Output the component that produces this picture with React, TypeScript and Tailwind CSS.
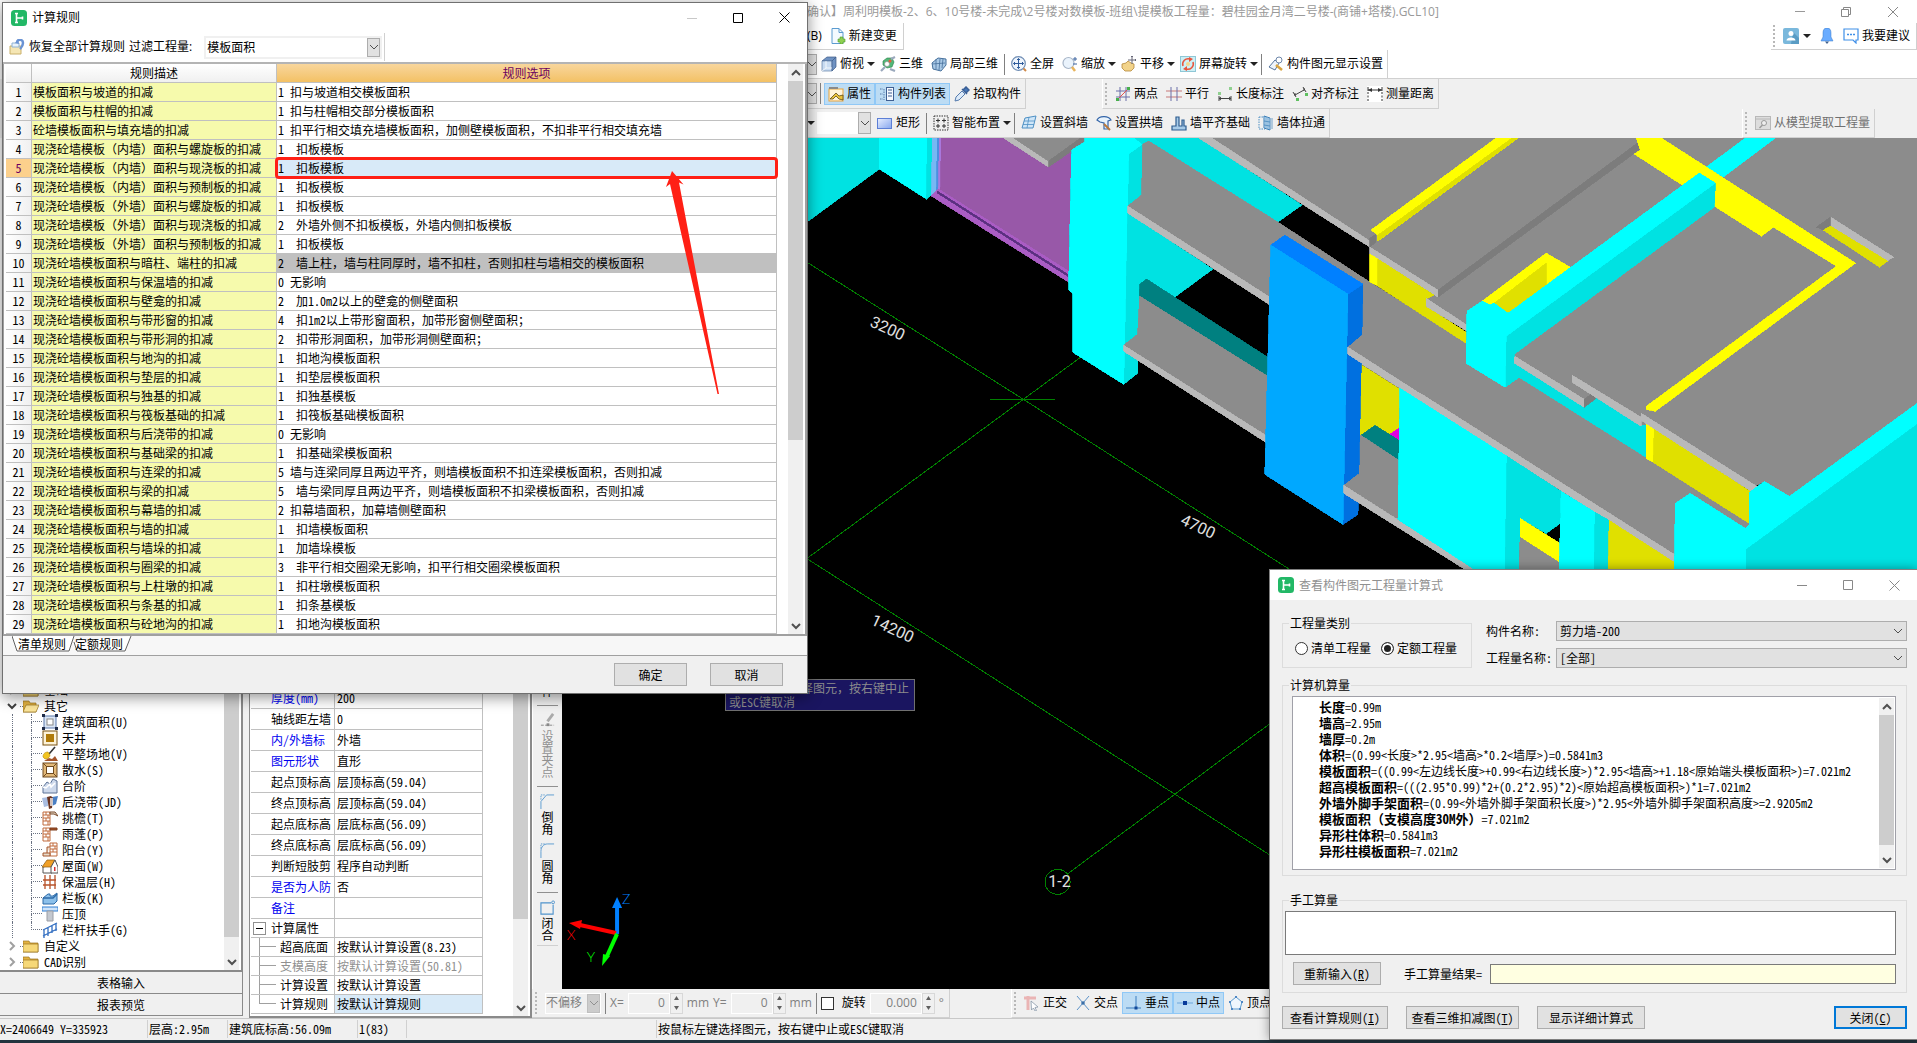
import type { ReactNode } from 'react'

const SONG =
  "font-[family-name:'Noto_Sans_Mono_CJK_SC','Noto_Sans_CJK_SC',monospace]"
const YAHEI = "font-[family-name:'Open_Sans','Noto_Sans_CJK_SC',sans-serif]"

/* ---------- icons ---------- */

function Ico({ children, size = 16 }: { children: ReactNode; size?: number }) {
  return (
    <svg width={size} height={size} viewBox="0 0 16 16" className="shrink-0" fill="none" aria-hidden="true">
      {children}
    </svg>
  )
}

const icons: Record<string, ReactNode> = {
  app: (
    <>
      <rect width="16" height="16" rx="3.5" fill="#22b866" />
      <path d="M5.500 3v10M5.500 8h6M11.500 6.500v3M4 3.500h3M4 12.500h3" stroke="#fff" strokeWidth="1.600" />
    </>
  ),
  restore: (
    <>
      <path d="M1 7h11v8H1z" fill="#f5e6b4" stroke="#c9b06a" />
      <path d="M3 4h7v4H3z" fill="#e9f3fb" stroke="#8fb2d2" />
      <path d="M8 3c1-3 6-3 6 1 0 3-1 4-3 6" stroke="#6a93d4" strokeWidth="2.500" />
      <path d="M6 4l3-4 1 5z" fill="#6a93d4" />
    </>
  ),
  newDoc: (
    <>
      <path d="M2 .5h7l4 4v11H2z" fill="#f4faff" stroke="#5b9bd0" />
      <path d="M9 .5v4h4" stroke="#5b9bd0" />
      <path d="M10 9h3v2h2v3h-2v2h-3v-2H8v-3h2z" fill="#8ed052" stroke="#4f9c30" strokeWidth=".6" />
    </>
  ),
  cube: (
    <>
      <path d="M1 5l5-4h9l-4 4z" fill="#6f92c2" stroke="#3c5a86" strokeWidth=".7" />
      <path d="M1 5h10v10H1z" fill="#c9dcf2" stroke="#5f7ea8" strokeWidth=".7" />
      <path d="M11 5l4-4v10l-4 4z" fill="#6f92c2" stroke="#3c5a86" strokeWidth=".7" />
      <path d="M5 5v7L1 15M5 12h6" stroke="#fff" strokeWidth=".8" />
    </>
  ),
  orbit: (
    <>
      <path d="M3 5l4-3h5l2 4-2 5-5 1-4-3z" fill="#52b878" stroke="#2a7d48" strokeWidth=".6" />
      <circle cx="7" cy="8" r="2.500" fill="#fff" stroke="#888" strokeWidth=".6" />
      <path d="M1 15l4-4M10 13l5 2M11 3l4-2" stroke="#9aa8bc" strokeWidth="2.200" />
      <circle cx="10" cy="5" r="1.500" fill="#e85a3c" />
    </>
  ),
  partial: (
    <>
      <path d="M1 7l6-5 8 1v6l-5 6-8-2z" fill="#a9c9e6" stroke="#46709c" />
      <path d="M5 3v10M9 3l-1 11M1 8l13-1M12 3l-1 9" stroke="#46709c" strokeWidth=".8" />
    </>
  ),
  fit: (
    <>
      <circle cx="7.500" cy="7.500" r="6.800" fill="#eef5fd" stroke="#6f8db4" strokeWidth="1.200" />
      <path d="M7.500 2.500v10M2.500 7.500h10M6 4l1.500-1.500L9 4M6 11l1.500 1.500L9 11M4 6L2.500 7.500 4 9M11 6l1.500 1.500L11 9" stroke="#2f5c9c" />
      <path d="M12.500 12.500l2.500 2.500" stroke="#d08a4a" strokeWidth="2" />
    </>
  ),
  zoom: (
    <>
      <circle cx="6.500" cy="7" r="5.500" fill="#eaf3fc" stroke="#a8b6c8" strokeWidth="1.200" />
      <path d="M10 11l3 4" stroke="#e8b45c" strokeWidth="2.500" />
      <path d="M11 3h4M13 1v4M11 8h4" stroke="#3d64a0" />
    </>
  ),
  pan: (
    <>
      <path d="M1 8l4-1 2-2 3 2 3 1v4l-3 3H4l-3-3z" fill="#f2d38a" stroke="#b5893a" strokeWidth=".8" />
      <path d="M11 0v8M7 4h8M10 1l1-1 1 1M14 3l1 1-1 1" stroke="#667" />
    </>
  ),
  rotate: (
    <>
      <rect x=".5" y=".5" width="15" height="15" fill="#cdeff5" stroke="#8fc7d6" />
      <path d="M3 10a5.500 5.500 0 017-7M13 6a5.500 5.500 0 01-7 7" stroke="#e8543c" strokeWidth="1.500" />
      <path d="M9 1l4 2-4 3zM7 15l-4-2 4-3z" fill="#e8543c" />
      <circle cx="8" cy="8" r="2" fill="#f4d98c" />
    </>
  ),
  display: (
    <>
      <path d="M1 11l6-7 4 3-4 7z" fill="#eef4fb" stroke="#56749c" />
      <circle cx="11" cy="4" r="3" fill="#fff" stroke="#6e87aa" />
      <path d="M8 9l6 5" stroke="#d9a441" strokeWidth="2.500" />
    </>
  ),
  props: (
    <>
      <rect x="1" y="3" width="14" height="12" fill="#fff4da" stroke="#e7a33c" />
      <path d="M1 1h9v2H1z" fill="#8a8a8a" />
      <path d="M2 13l6-6 3 3 4-1v5l-4-1-3-3-3 3z" fill="#e9c33c" stroke="#5c4a1a" strokeWidth=".8" />
    </>
  ),
  list: (
    <>
      <path d="M1 3h3M1 8h3M1 13h3M5 3v11" stroke="#5579a8" strokeDasharray="1.500 1" />
      <rect x="7.500" y="1.500" width="7" height="13" fill="#f5f9ff" stroke="#3f5f92" />
      <path d="M9 4h4M9 7h4M9 10h4" stroke="#3f5f92" strokeWidth="1.200" />
    </>
  ),
  dropper: (
    <>
      <path d="M1 15l1-4 6-6 3 3-6 6z" fill="#dbe9f8" stroke="#567cae" />
      <path d="M8 3l5 5M9 4l3-3 3 3-3 3z" fill="#4778b8" stroke="#3a5f96" strokeWidth="1.500" />
    </>
  ),
  twoPoint: (
    <>
      <path d="M1 5h14M1 11h14M5 1v14M11 1v14" stroke="#6b6fa8" />
      <path d="M2 14L14 2" stroke="#e05252" />
      <path d="M12 1h3v3h-3zM1 12h3v3H1z" fill="#47b04b" />
    </>
  ),
  parallel: (
    <>
      <path d="M0 5h16M0 11h16" stroke="#c77878" />
      <path d="M5 1v14M11 1v14" stroke="#6b6fa8" />
    </>
  ),
  length: (
    <>
      <path d="M2 10v5M14 10v5M2 12.500h12M4 11l-2 1.500L4 14M12 11l2 1.500-2 1.500" stroke="#444" />
      <path d="M1 6h3v3H1zM12 1h3v3h-3z" fill="#8fd08f" />
    </>
  ),
  aligned: (
    <>
      <path d="M1 6l3 5M11 1l3 5M3 9l9-5M3 7v3M12 2v3" stroke="#444" />
      <path d="M4 12h3v3H4zM13 7h3v3h-3z" fill="#5fc060" />
    </>
  ),
  measure: (
    <>
      <path d="M0 0h16v16H0z" fill="#fff" />
      <path d="M1 1v4M15 1v4M1 4h14" stroke="#333" />
      <path d="M1 6v9M15 6v9" stroke="#333" strokeDasharray="2 1.500" />
      <path d="M1 4l4-2v4zM15 4l-4-2v4z" fill="#333" />
    </>
  ),
  rect: (
    <>
      <rect x=".5" y="3.500" width="14" height="10" fill="url(#rectFill)" stroke="#5c7fd6" />
      <defs>
        <linearGradient id="rectFill" x1="0" y1="0" x2="1" y2="1">
          <stop stopColor="#e8efff" />
          <stop offset="1" stopColor="#86a6ee" />
        </linearGradient>
      </defs>
    </>
  ),
  smart: (
    <>
      <rect x="1" y="1" width="14" height="14" stroke="#333" strokeDasharray="1.500 1" />
      <path d="M5 3.500v4M3 5.500h4M11 3.500v4M9 5.500h4M5 9v4M3 11h4M11 9v4M9 11h4" stroke="#333" />
    </>
  ),
  slope: (
    <>
      <path d="M4 3l11-2-3 12H1z" fill="#cfe6f8" stroke="#4e90c4" />
      <path d="M3 6h11M2 9.500h11M8 2L6 13" stroke="#4e90c4" strokeWidth=".8" />
    </>
  ),
  arch: (
    <>
      <path d="M1 5c2-4 11-5 14 0l-3 1v8H8V8L4 7z" fill="#e8f3fc" stroke="#3465a8" strokeWidth="1.200" />
      <path d="M8 9l6 6" stroke="#b8783c" strokeWidth="2" />
    </>
  ),
  align: (
    <path d="M1 15v-4h4V2h3v9h3V5h2v6h2v4z" fill="#a8cbe8" stroke="#2d5c8f" strokeWidth="1.200" />
  ),
  through: (
    <>
      <path d="M1 2h6v12H1z" stroke="#4e90c4" strokeDasharray="1.500 1" />
      <path d="M6 1l6 2v12l-6-2z" fill="#cfe6f8" stroke="#3b7fb8" />
      <path d="M8 2v11M10 3v11M6 6l6 1M6 10l6 1M14 3v11" stroke="#3b7fb8" strokeWidth=".7" />
    </>
  ),
  extract: (
    <>
      <rect x=".5" y="1.500" width="15" height="13" fill="#ddd" stroke="#b8b8b8" />
      <path d="M1 4h14" stroke="#b8b8b8" />
      <circle cx="9" cy="8" r="2.500" fill="#eee" stroke="#999" />
      <path d="M7.500 10l-3 3" stroke="#999" strokeWidth="1.500" />
    </>
  ),
  user: (
    <>
      <rect width="16" height="16" rx="2" fill="#7ab8dc" />
      <path d="M10 4l6 6v6H8z" fill="#5a9cc4" />
      <circle cx="8" cy="5.500" r="2.500" fill="#fff" />
      <path d="M3.500 12.500c0-4 9-4 9 0z" fill="#fff" />
    </>
  ),
  bell: (
    <>
      <path d="M8 0c3 0 4 2 4 5v4l2 4H2l2-4V5c0-3 1-5 4-5z" fill="#6aacff" stroke="#3579c8" strokeWidth=".5" />
      <path d="M6 13.500h4L8 16z" fill="#3d5f8c" />
    </>
  ),
  chat: (
    <>
      <path d="M1 1h14v11h-2v3l-3-3H1z" fill="#fff" stroke="#3f8fe8" strokeWidth="1.200" />
      <path d="M4 6.500h8" stroke="#3f8fe8" strokeWidth="1.300" strokeDasharray="2 1" />
    </>
  ),
  ortho: (
    <>
      <path d="M0 3h12M4 1v14" stroke="#eab4b4" strokeWidth="3" />
      <path d="M7 6l7 6-3 .5 1.500 3-1.500.5-1.500-3-2 2z" fill="#fff" stroke="#8898a8" strokeWidth=".8" />
    </>
  ),
  cross: (
    <>
      <path d="M2 1l12 14M14 1L2 15" stroke="#5b92c8" />
      <circle cx="8" cy="8" r="1.800" fill="#3a6fa8" />
    </>
  ),
  perp: (
    <>
      <path d="M10 1v12M0 13h15" stroke="#3c7fc0" />
      <rect x="8.500" y="11.500" width="3" height="3" fill="#10489a" />
    </>
  ),
  mid: (
    <>
      <path d="M0 8h16" stroke="#6da6dc" />
      <rect x="6" y="6" width="4" height="4" fill="#083a9a" />
    </>
  ),
  vertex: (
    <>
      <path d="M8 2l6 5-2 7H4L2 7z" fill="#eef6fd" stroke="#5b9bd0" />
      <path d="M7 1h2v2H7zM13 6h2v2h-2zM1 6h2v2H1zM3 13h2v2H3zM11 13h2v2h-2z" fill="#4d86c4" />
    </>
  ),
  area: (
    <>
      <rect x="2" y="2" width="12" height="12" fill="#dbe6f5" stroke="#5a78ac" />
      <rect x="5" y="5" width="6" height="6" fill="#fff" stroke="#888" />
      <path d="M0 0h3v3H0zM13 0h3v3h-3zM0 13h3v3H0zM13 13h3v3h-3z" fill="#1f2c48" />
    </>
  ),
  shaft: (
    <>
      <rect x="1" y="1" width="14" height="14" fill="#fdf3d8" stroke="#7a5210" />
      <rect x="4" y="4" width="8" height="8" fill="#b07a08" />
    </>
  ),
  shovel: (
    <>
      <path d="M7 8l6-7" stroke="#333" strokeWidth="1.600" />
      <path d="M1 11c0-4 3-5 5-5l2 3c0 2-2 4-5 4z" fill="#f2c420" stroke="#b58a08" strokeWidth=".6" />
      <path d="M2 15l5-3 3 1 3-3 3 5z" fill="#a4552a" />
    </>
  ),
  apron: (
    <>
      <rect x="1" y="1" width="14" height="14" fill="#e2b878" stroke="#6e4a20" />
      <rect x="4.500" y="4.500" width="7" height="7" fill="#fff" stroke="#6e4a20" />
      <path d="M1 1l3 3M15 1l-3 3M1 15l3-3M15 15l-3-3" stroke="#6e4a20" />
    </>
  ),
  steps: (
    <>
      <path d="M1 15V9l4-5 3 2 3-5 4 2v12z" fill="#cdd9ec" stroke="#5d7397" />
      <path d="M1 9l3 1 4-4 1 3 4-4" stroke="#fff" strokeWidth="1.500" />
    </>
  ),
  strip: (
    <>
      <path d="M0 4l6-1v9l-4 1z" fill="#a9bde0" />
      <path d="M10 3l6-1-2 8-4 2z" fill="#4a7fc4" />
      <path d="M5 3l4-1 2 2-1 10-3 1z" fill="#6b3420" />
      <path d="M8 4h3v8H8z" fill="#fff" opacity=".7" />
    </>
  ),
  eave: (
    <>
      <path d="M1 2h7v13H1zM1 5h7M1 8h7M1 11h7M4 2v3M6 5v3M4 8v3M6 11v4" fill="#fff" stroke="#c06a3c" />
      <path d="M8 2h5l3 4-4-2H8z" fill="#e8dccb" stroke="#7a4a2a" />
    </>
  ),
  canopy: (
    <>
      <path d="M1 2h7v13H1zM1 5h7M1 8h7M1 11h7M4 2v3M6 5v3M4 8v3M6 11v4" fill="#fff" stroke="#c06a3c" />
      <path d="M8 2h7v2H8z" fill="#a4552a" stroke="#7a3a1a" />
    </>
  ),
  balcony: (
    <>
      <path d="M8 1h7v13H8zM8 4h7M8 7h7M8 10h7M11 1v3M13 4v3M11 7v3" fill="#fff" stroke="#c06a3c" />
      <path d="M1 14v-3h7v3zM5 11V5h3" fill="#e8dccb" stroke="#a4552a" />
    </>
  ),
  roof: (
    <>
      <path d="M1 9v6h9V7z" fill="#fff" stroke="#555" />
      <path d="M0 9l5-7h8l-4 7z" fill="#f0a028" stroke="#8a5a10" strokeWidth=".7" />
      <path d="M9 9l4-7 3 7v6H9z" fill="#fff" stroke="#555" />
      <path d="M12 9h1.500v4H12z" fill="#d83030" />
    </>
  ),
  insulation: (
    <path d="M3 1v14M8 1v14M13 1v14M1 6h13M1 11h13" stroke="#b8532a" strokeWidth="1.300" />
  ),
  railBoard: (
    <>
      <path d="M1 8l5-4h2v2h3l4-3v8l-3 3H1z" fill="#8cc0ea" stroke="#2c6aa8" />
      <path d="M1 8h10l4-4" stroke="#2c6aa8" strokeWidth="1.500" />
    </>
  ),
  coping: (
    <>
      <path d="M0 1h16v4H0z" fill="#cfe4fa" stroke="#2f7dd0" />
      <path d="M5 5h6v10H5z" fill="#c4c8cf" stroke="#9a9ea6" />
    </>
  ),
  handrail: (
    <path d="M1 8l14-7M1 14l6-3 8-4M2 8v8M6 6v8M10 4v7M14 1v8" stroke="#2f6cc0" strokeWidth="1.300" />
  ),
  folder: (
    <>
      <path d="M0 3h6l1 2h8v9H0z" fill="#e3b341" stroke="#9a7420" strokeWidth=".7" />
      <path d="M0 6h15v8H0z" fill="#f6d878" stroke="#9a7420" strokeWidth=".7" />
    </>
  ),
  folderOpen: (
    <>
      <path d="M0 3h6l1 2h6v9H0z" fill="#e3b341" stroke="#9a7420" strokeWidth=".7" />
      <path d="M3 7h13l-3 7H0z" fill="#fbe59a" stroke="#9a7420" strokeWidth=".7" />
    </>
  ),
  grip: (
    <>
      <path d="M14 1l-6 8" stroke="#aaa" strokeWidth="3" />
      <path d="M1 13h14" stroke="#888" strokeDasharray="3 1.500" />
      <path d="M7 11h3v3H7z" fill="#888" />
    </>
  ),
  chamfer: (
    <>
      <path d="M1 1h5M1 2v5" stroke="#5b9bd0" strokeDasharray="1.500 1" />
      <path d="M1 16V8l6-7h8" stroke="#5b9bd0" />
    </>
  ),
  fillet: (
    <>
      <path d="M1 1h5M1 2v5" stroke="#5b9bd0" strokeDasharray="1.500 1" />
      <path d="M1 16V9c0-5 3-8 7-8h7" stroke="#5b9bd0" />
    </>
  ),
  close: (
    <>
      <path d="M12 3H1v12h13V5" stroke="#4f93cc" strokeWidth="1.200" />
      <circle cx="14" cy="2.500" r="1.500" stroke="#4f93cc" />
    </>
  ),
}

function Caret() {
  return (
    <svg width="8" height="4" viewBox="0 0 8 4" className="shrink-0" aria-hidden="true">
      <path d="M0 0h8L4 4z" fill="#222" />
    </svg>
  )
}

function Chevron({ dir = 'down', color = '#505050', w = 1 }: { dir?: 'up' | 'down' | 'right'; color?: string; w?: number }) {
  const d = dir === 'down' ? 'M1 3l4 4 4-4' : dir === 'up' ? 'M1 7l4-4 4 4' : 'M3 1l4 4-4 4'
  return (
    <svg width="10" height="10" viewBox="0 0 10 10" className="shrink-0" fill="none" aria-hidden="true">
      <path d={d} stroke={color} strokeWidth={w} />
    </svg>
  )
}

/* ---------- small controls ---------- */

interface ToolProps {
  icon: string
  label: string
  caret?: boolean
  active?: boolean
  disabled?: boolean
}

function Tool({ icon, label, caret, active, disabled }: ToolProps) {
  const state = active ? 'bg-[#bcdcf4] outline outline-1 -outline-offset-1 outline-[#90c8f6]' : ''
  return (
    <button
      type="button"
      disabled={disabled}
      className={`flex h-[22px] shrink-0 items-center gap-[3px] whitespace-nowrap pl-1 ${caret ? 'pr-px' : 'pr-1'} ${disabled ? 'text-[#707070]' : ''} ${state}`}
    >
      <Ico>{icons[icon]}</Ico>
      {label}
      {caret && <Caret />}
    </button>
  )
}

const Sep = () => <span className="mx-[2px] h-[21px] w-px shrink-0 bg-[#808080]" />

const Grip = () => <span className="mr-1 ml-[2px] h-[22px] w-0 border-l-2 border-dotted border-[#b8b8b8]" />

function ComboEnd() {
  return (
    <button type="button" aria-label="展开" className="flex h-[21px] w-[10px] items-center justify-center border border-[#adadad] bg-[#e1e1e1]">
      <Chevron />
    </button>
  )
}

function WindowButtons({ color, faded }: { color: string; faded?: boolean }) {
  return (
    <div className="flex items-center">
      <button type="button" aria-label="最小化" className="flex h-6 w-[46px] items-center justify-center">
        <svg width="10" height="10" viewBox="0 0 10 10"><path d="M0 5.500h10" stroke={faded ? '#c8c8c8' : color} /></svg>
      </button>
      <button type="button" aria-label="最大化" className="flex h-6 w-[46px] items-center justify-center">
        <svg width="10" height="10" viewBox="0 0 10 10"><path d="M.5.5h9v9h-9z" fill="none" stroke={color} /></svg>
      </button>
      <button type="button" aria-label="关闭" className="flex h-6 w-[46px] items-center justify-center">
        <svg width="11" height="11" viewBox="0 0 11 11"><path d="M.5.5l10 10M10.500.5l-10 10" stroke={color} /></svg>
      </button>
    </div>
  )
}

function ScrollBar({ thumb, up }: { thumb: string; up?: boolean }) {
  return (
    <div className="flex w-[15px] shrink-0 flex-col bg-[#f0f0f0]">
      {up && (
        <span className="flex h-[17px] items-center justify-center">
          <Chevron dir="up" w={2} />
        </span>
      )}
      <span className={`bg-[#cdcdcd] ${thumb}`} />
      <span className="mt-auto flex h-[17px] items-center justify-center">
        <Chevron w={2} />
      </span>
    </div>
  )
}

/* ---------- top bars ---------- */

function TopBars() {
  return (
    <header className={`shrink-0 text-xs ${YAHEI}`}>
      <div className="bg-white pl-[807px]">
        <div className="flex h-[23px] items-center justify-between">
          <h1 className="whitespace-nowrap text-[#999]">
            确认】周利明模板-2、6、10号楼-未完成\2号楼对数模板-班组\提模板工程量：碧桂园金月湾二号楼-(商铺+塔楼).GCL10]
          </h1>
          <div className="flex">
            <button type="button" aria-label="最小化" className="flex w-[46px] items-center justify-center">
              <svg width="10" height="10" viewBox="0 0 10 10"><path d="M0 4.500h10" stroke="#999" /></svg>
            </button>
            <button type="button" aria-label="还原" className="flex w-[46px] items-center justify-center">
              <svg width="10" height="10" viewBox="0 0 10 10" fill="none" stroke="#888"><path d="M.5 2.500h7v7h-7zM2.500 2.500v-2h7v7h-2" /></svg>
            </button>
            <button type="button" aria-label="关闭" className="flex w-[48px] items-center justify-center">
              <svg width="10" height="10" viewBox="0 0 10 10"><path d="M0 0l10 10M10 0L0 10" stroke="#888" /></svg>
            </button>
          </div>
        </div>
        <div className="flex h-[27px] items-stretch justify-between">
          <div className="flex items-center gap-1 border-r border-b border-[#d0d0d0] pr-[2px]">
            <span>(B)</span>
            <Tool icon="newDoc" label="新建变更" />
          </div>
          <div className="flex items-center border-r border-b border-[#d0d0d0] pr-[2px]">
            <Grip />
            <button type="button" aria-label="用户" className="flex items-center gap-1 px-1">
              <Ico>{icons.user}</Ico>
              <Caret />
            </button>
            <button type="button" aria-label="消息" className="px-1">
              <Ico>{icons.bell}</Ico>
            </button>
            <Tool icon="chat" label="我要建议" />
          </div>
        </div>
        <div className="flex h-[29px] items-stretch border-b border-[#d0d0d0]">
          <div className="flex items-center border-r border-[#d0d0d0]">
            <ComboEnd />
            <Tool icon="cube" label="俯视" caret />
            <Tool icon="orbit" label="三维" />
            <Tool icon="partial" label="局部三维" />
            <Sep />
            <Tool icon="fit" label="全屏" />
            <Tool icon="zoom" label="缩放" caret />
            <Tool icon="pan" label="平移" caret />
            <Tool icon="rotate" label="屏幕旋转" caret />
            <Sep />
            <Tool icon="display" label="构件图元显示设置" />
          </div>
        </div>
      </div>
      <div className="flex h-[30px] items-stretch gap-[76px] pl-[807px]">
        <div className="flex items-center border-r border-b border-[#d0d0d0]">
          <ComboEnd />
          <span className="mx-[3px] h-[21px] w-px bg-[#808080]" />
          <Tool icon="props" label="属性" active />
          <Tool icon="list" label="构件列表" active />
          <Tool icon="dropper" label="拾取构件" />
        </div>
        <div className="flex items-center border-r border-b border-l border-[#d0d0d0] border-l-white">
          <Grip />
          <Tool icon="twoPoint" label="两点" />
          <Tool icon="parallel" label="平行" />
          <Tool icon="length" label="长度标注" />
          <Tool icon="aligned" label="对齐标注" />
          <Tool icon="measure" label="测量距离" />
        </div>
      </div>
      <div className="flex h-[29px] items-stretch justify-between pr-[42px] pl-[807px]">
        <div className="flex items-center border-r border-b border-[#d0d0d0]">
          <Caret />
          <span className="ml-[2px] h-[22px] w-[41px] bg-white" />
          <button type="button" aria-label="展开" className="mr-[2px] flex h-[22px] w-[13px] items-center justify-center border border-[#adadad] bg-[#e1e1e1]">
            <Chevron />
          </button>
          <Tool icon="rect" label="矩形" />
          <Sep />
          <Tool icon="smart" label="智能布置" caret />
          <Sep />
          <Tool icon="slope" label="设置斜墙" />
          <Tool icon="arch" label="设置拱墙" />
          <Tool icon="align" label="墙平齐基础" />
          <Tool icon="through" label="墙体拉通" />
        </div>
        <div className="flex items-center border-r border-b border-l border-[#d0d0d0] border-l-white">
          <Grip />
          <Tool icon="extract" label="从模型提取工程量" disabled />
        </div>
      </div>
    </header>
  )
}

/* ---------- component tree ---------- */

const treeItems = [
  ['area', '建筑面积(U)'],
  ['shaft', '天井'],
  ['shovel', '平整场地(V)'],
  ['apron', '散水(S)'],
  ['steps', '台阶'],
  ['strip', '后浇带(JD)'],
  ['eave', '挑檐(T)'],
  ['canopy', '雨蓬(P)'],
  ['balcony', '阳台(Y)'],
  ['roof', '屋面(W)'],
  ['insulation', '保温层(H)'],
  ['railBoard', '栏板(K)'],
  ['coping', '压顶'],
  ['handrail', '栏杆扶手(G)'],
]

function Folder({ label, open }: { label: string; open?: boolean }) {
  return (
    <li className="flex h-4 items-center pl-[7px]">
      <Chevron dir={open ? 'down' : 'right'} color={open ? '#404040' : '#a0a0a0'} w={2} />
      <span className="ml-[3px] w-[3px] border-b border-dotted border-gray-500" />
      <Ico>{icons[open ? 'folderOpen' : 'folder']}</Ico>
      <span className="ml-[5px]">{label}</span>
    </li>
  )
}

function TreePanel() {
  return (
    <section className="flex w-[243px] shrink-0 flex-col pb-[2px]">
      <div className="flex min-h-0 flex-1 border-r-2 border-b-2 border-[#8a8a8a] bg-white pr-[2px]">
        <ul className="flex min-h-0 flex-1 flex-col justify-end overflow-hidden whitespace-nowrap leading-4">
          <Folder label="基础" />
          <Folder label="其它" open />
          {treeItems.map(([icon, label], i) => (
            <li key={icon} className="ml-[12px] flex h-4 items-center border-l border-dotted border-gray-500 pl-[18px]">
              <span className="w-[11px]">
                <span className="block h-2 border-b border-l border-dotted border-gray-500" />
                <span className={`block h-2 ${i < treeItems.length - 1 ? 'border-l border-dotted border-gray-500' : ''}`} />
              </span>
              <Ico>{icons[icon]}</Ico>
              <span className="ml-1">{label}</span>
            </li>
          ))}
          <Folder label="自定义" />
          <Folder label="CAD识别" />
        </ul>
        <ScrollBar thumb="h-[96%]" />
      </div>
      <button type="button" className="h-[22px] border-r border-b border-[#8a8a8a]">表格输入</button>
      <button type="button" className="h-[22px] border-r border-b border-[#8a8a8a]">报表预览</button>
    </section>
  )
}

/* ---------- property grid ---------- */

const properties = [
  { label: '厚度(mm)', value: '200', blue: true },
  { label: '轴线距左墙', value: '0' },
  { label: '内/外墙标', value: '外墙', blue: true },
  { label: '图元形状', value: '直形', blue: true },
  { label: '起点顶标高', value: '层顶标高(59.04)' },
  { label: '终点顶标高', value: '层顶标高(59.04)' },
  { label: '起点底标高', value: '层底标高(56.09)' },
  { label: '终点底标高', value: '层底标高(56.09)' },
  { label: '判断短肢剪', value: '程序自动判断' },
  { label: '是否为人防', value: '否', blue: true },
  { label: '备注', value: '', blue: true },
]

const calcProperties = [
  { label: '超高底面', value: '按默认计算设置(8.23)' },
  { label: '支模高度', value: '按默认计算设置(50.81)', muted: true },
  { label: '计算设置', value: '按默认计算设置' },
  { label: '计算规则', value: '按默认计算规则', selected: true },
]

function PropertyPanel() {
  const cell = 'border-r border-b border-[#c0c0c0] p-0'
  return (
    <section className="ml-[6px] flex w-[283px] shrink-0 border-r-2 border-b-2 border-l border-[#8a8a8a] bg-white">
      <div className="flex min-h-0 flex-1 flex-col justify-end overflow-hidden pr-[30px] pb-[2px] pl-px">
        <table className="w-full table-fixed border-separate border-spacing-0 whitespace-nowrap text-left">
          <colgroup>
            <col className="w-[84px]" />
            <col />
          </colgroup>
          <tbody>
            {properties.map((p) => (
              <tr key={p.label} className="h-[21px]">
                <th scope="row" className={`${cell} overflow-hidden pl-5 font-normal ${p.blue ? 'text-[#0000f0]' : ''}`}>
                  {p.label}
                </th>
                <td className={`${cell} pl-[2px]`}>{p.value}</td>
              </tr>
            ))}
            <tr className="h-[19px]">
              <th scope="row" className={`${cell} font-normal`}>
                <span className="flex items-center gap-[5px] pl-[2px]">
                  <button type="button" aria-label="收起" className="flex size-[13px] items-center justify-center border border-[#909090] leading-none">
                    <span className="h-px w-[7px] bg-black" />
                  </button>
                  计算属性
                </span>
              </th>
              <td className={cell} />
            </tr>
            {calcProperties.map((p, i) => (
              <tr key={p.label} className={`h-[19px] ${p.muted ? 'text-[#909090]' : ''}`}>
                <th scope="row" className={`${cell} font-normal`}>
                  <span className="flex items-center pl-2">
                    <span className="mr-1 w-[17px]">
                      <span className="block h-[9px] border-b border-l border-[#a0a0a0]" />
                      <span className={`block h-[9px] ${i < 3 ? 'border-l border-[#a0a0a0]' : ''}`} />
                    </span>
                    {p.label}
                  </span>
                </th>
                <td className={`${cell} pl-[2px] ${p.selected ? 'bg-[#d8eaf8]' : ''}`}>{p.value}</td>
              </tr>
            ))}
          </tbody>
        </table>
      </div>
      <ScrollBar thumb="h-[89%]" />
      <span className="w-[2px]" />
    </section>
  )
}

/* ---------- side edit bar ---------- */

function SideTool({ icon, label, disabled }: { icon: string; label: string; disabled?: boolean }) {
  return (
    <button type="button" disabled={disabled} className={`flex w-full flex-col items-center gap-[3px] ${disabled ? 'text-[#909090]' : ''}`}>
      <Ico size={15}>{icons[icon]}</Ico>
      <span className="w-3 leading-3 break-all">{label}</span>
    </button>
  )
}

function SideBar() {
  return (
    <div className={`flex w-[30px] shrink-0 flex-col justify-end overflow-hidden border-l border-white px-1 pb-[43px] ${YAHEI}`}>
      <div className="flex flex-col items-center gap-[7px] border-b border-[#d0d0d0] pb-[3px]">
        <SideTool icon="close" label="打断构件" />
        <span className="h-px w-full bg-[#909090]" />
        <SideTool icon="grip" label="设置夹点" disabled />
        <span className="h-px w-full bg-[#909090]" />
        <SideTool icon="chamfer" label="倒角" />
        <SideTool icon="fillet" label="圆角" />
        <span className="h-px w-full bg-[#909090]" />
        <SideTool icon="close" label="闭合" />
      </div>
    </div>
  )
}

/* ---------- 3D view ---------- */

const GRAY = '#8c8c8c'
const EDGE = '#b9b9b9'
const SHADE = '#7c7c7c'
const CYAN = '#00ffff'
const CYAN_D = '#00e2e2'
const YEL = '#ffff00'
const YEL_D = '#e0e000'

const faces: [string, string][] = [
  // left walls
  [CYAN_D, '560,138 879,138 879,169 808,221 560,402'],
  [CYAN, '879,138 928,138 926,199 879,169'],
  [CYAN_D, '927,138 932,138 931,195 926,199'],
  ['#76b8f4', '932,138 938,138 937,191 931,195'],
  ['#4a90e0', '937,138 939,138 938,190 936,191'],
  ['#a878dc', '939,138 942,138 941,191 938,190'],
  ['#9858a8', '941,138 1071,138 1068,278 940,191'],
  ['#aa5cc4', '938,189 1068,271 1068,282 931,196'],
  ['#5a3080', '937,191 1067,274 1067,276 937,193'],
  [EDGE, '1003,138 1013,138 1048,161 1048,167'],
  [GRAY, '1013,138 1080,138 1048,161'],
  [SHADE, '1080,138 1084,138 1084,142 1048,167 1048,161'],
  // tall column
  [CYAN_D, '1128,154 1142,144 1137,373 1123,384'],
  [CYAN, '1071,150 1084,142 1084,138 1134,138 1142,144 1128,154 1123,384 1072,352 1072,293 1068,290'],
  [CYAN_D, '1134,138 1198,138 1301,205 1277,222 1148,141 1142,144'],
  // middle slab
  [CYAN_D, '1127,213 1212,269 1174,297 1146,279 1139,285 1126,285'],
  [GRAY, '1148,141 1142,144 1141,195 1127,206 1350,350 1673,554 1744,528 1749,523 1645,457 1518,377 1465,342 1369,282 1277,222'],
  [EDGE, '1127,206 1350,349 1673,554 1673,562 1350,357 1127,213'],
  // lower slab
  ['#008080', '1146,279 1267,357 1267,376 1139,296 1139,284'],
  [GRAY, '1139,296 1267,376 1265,435 1123,345 1137,334'],
  [EDGE, '1123,345 1265,435 1265,442 1123,351'],
  [YEL_D, '1358,363 1399,389 1398,430 1389,434 1374,425 1357,437'],
  ['#e000e0', '1389,434 1399,427 1398,440'],
  ['#008080', '1360,435 1374,425 1398,440 1398,460'],
  [GRAY, '1357,433 1398,460 1397,518 1350,489'],
  // selected wall
  ['#0070e0', '1347,294 1362,284 1357,514 1342,524'],
  ['#0080ff', '1270,245 1284,235 1362,284 1347,294'],
  ['#00a8ff', '1270,245 1347,294 1342,524 1264,474'],
  [GRAY, '1347,347 1361,335 1420,372 1420,393'],
  [EDGE, '1347,347 1420,394 1420,401 1347,354'],
  [GRAY, '1343,485 1357,474 1397,500 1397,519'],
  [EDGE, '1343,485 1475,569 1464,569 1343,493'],
  // walls under the middle slab
  [CYAN, '1399,388 1506,456 1504,570 1475,570 1397,519'],
  [CYAN_D, '1506,456 1560,491 1559,523 1545,533 1519,518 1518,570 1504,570'],
  [YEL, '1519,518 1559,543 1558,562 1519,537'],
  [GRAY, '1519,537 1558,562 1558,570 1518,570'],
  [CYAN, '1560,491 1594,512 1593,570 1558,570'],
  [CYAN_D, '1594,512 1608,520 1607,570 1593,570'],
  [YEL_D, '1608,520 1673,562 1673,570 1607,570'],
  // upper slab
  [GRAY, '1211,138 1369,241 1369,248 1437,291 1425,298 1466,325 1513,356 1583,400 1590,394 1640,426 1750,487 1763,481 1788,496 1917,402 1917,138'],
  [EDGE, '1198,138 1211,138 1369,241 1369,247 1350,235'],
  [SHADE, '1369,238 1375,234 1375,242 1369,247'],
  [EDGE, '1369,247 1437,290 1437,297 1369,254'],
  [SHADE, '1437,290 1639,141 1639,149 1437,297'],
  [YEL, '1369,254 1377,259 1377,286 1369,282'],
  [YEL_D, '1377,259 1433,295 1425,299 1425,306 1465,332 1465,343 1377,286'],
  [EDGE, '1425,298 1466,325 1466,331 1425,306'],
  [CYAN_D, '1511,361 1583,406 1595,398 1640,425 1645,425 1645,457 1518,377 1504,387 1504,362'],
  [EDGE, '1512,355 1583,399 1583,407 1512,362'],
  [SHADE, '1583,399 1590,394 1595,398 1583,407'],
  [EDGE, '1571,375 1640,417 1640,426 1571,382'],
  [YEL, '1645,423 1653,428 1652,462 1645,458'],
  [YEL_D, '1653,428 1749,491 1748,523 1652,462'],
  [EDGE, '1640,413 1757,487 1750,491 1640,420'],
  // beams
  [YEL, '1495,138 1517,138 1377,241 1377,235 1370,230'],
  [YEL_D, '1511,138 1517,138 1377,241 1377,235'],
  [CYAN, '1744,138 1774,138 1722,177 1705,167'],
  [YEL, '1635,138 1660,138 1854,263 1654,411 1645,409 1645,406 1835,266 1772,227 1760,236 1713,206 1681,185 1633,154 1639,150'],
  [YEL, '1545,253 1569,267 1507,313 1489,305 1481,301'],
  [YEL_D, '1545,263 1545,285 1507,313 1493,303'],
  [CYAN_D, '1505,336 1714,183 1713,207 1513,354 1512,375 1518,377 1504,387'],
  [CYAN, '1481,301 1489,305 1493,303 1507,313 1698,173 1714,183 1505,336 1504,387 1465,363 1466,311'],
  [EDGE, '1829,217 1892,257 1885,261 1829,226'],
  [SHADE, '1815,227 1829,217 1829,226 1822,230'],
  [YEL_D, '1829,226 1886,261 1878,267 1822,230'],
  // right wall
  [CYAN, '1674,503 1689,493 1744,528 1748,524 1748,492 1763,481 1788,496 1917,402 1917,423 1745,549 1745,570 1673,570'],
  [CYAN_D, '1745,549 1917,423 1917,570 1745,570'],
]

function ModelView() {
  return (
    <div className="relative min-w-0 flex-1 overflow-hidden bg-black">
      <svg
        viewBox="562 138 1355 850"
        preserveAspectRatio="xMinYMin slice"
        className="absolute inset-0 h-full w-full"
        role="img"
        aria-label="三维模型"
      >
        <g stroke="#008000" fill="none" shapeRendering="crispEdges">
          <path d="M562 107L1022 398.500L1400 640M808 557L1080 357M808 559L1300 874M1067 873L1300 700M989 399h65" />
          <circle cx="1057" cy="881" r="12.500" />
        </g>
        {/* a hairline stroke in the face colour closes the seams between neighbours */}
        <g shapeRendering="crispEdges" strokeWidth=".8">
          {faces.map(([fill, points], i) => (
            <polygon key={i} fill={fill} stroke={fill} points={points} />
          ))}
        </g>
        <g fill="#e0e0e0" fontSize="16" textAnchor="middle" fontFamily="Roboto, sans-serif">
          <text transform="translate(885 333) rotate(25)">3200</text>
          <text transform="translate(1195 531) rotate(25)">4700</text>
          <text transform="translate(890 633) rotate(25)">14200</text>
          <text x="1059" y="886">1-2</text>
        </g>
        <g strokeWidth="4">
          <path d="M617 933V904" stroke="#0080ff" />
          <path d="M612 907l5-11 5 11z" fill="#0080ff" />
          <path d="M616 932l-36-8" stroke="red" />
          <path d="M569 922l13-3-2 9z" fill="red" />
          <path d="M617 933l-10 22" stroke="lime" />
          <path d="M602 965l1-12 7 2z" fill="lime" />
        </g>
        <g fontSize="14" textAnchor="middle" fontFamily="Lato, sans-serif" fontWeight="300">
          <text x="626" y="903" fill="#0080ff">Z</text>
          <text x="571" y="939" fill="red">X</text>
          <text x="591" y="961" fill="lime">Y</text>
        </g>
      </svg>
      <p className="absolute top-[541px] left-[163px] w-[190px] border border-[#707070] bg-[#1a1560] px-[3px] py-px leading-[14px] text-[#8c8c8c]">
        按鼠标左键选择图元，按右键中止或ESC键取消
      </p>
    </div>
  )
}

/* ---------- bottom bars ---------- */

function Spin({ label, value, width, unit }: { label?: string; value: string; width: string; unit: string }) {
  return (
    <label className="flex items-center gap-1">
      {label && <span>{label}</span>}
      <span className="flex h-[21px]">
        <input readOnly aria-label={label ?? '角度'} value={value} className={`border border-white bg-[#f0f0f0] pr-1 text-right ${width}`} />
        <span className="flex w-[13px] flex-col justify-around border border-[#d8d8d8] px-[3px]">
          <svg width="5" height="4" viewBox="0 0 5 4"><path d="M0 4h5L2.500 0z" fill="#606060" /></svg>
          <svg width="5" height="4" viewBox="0 0 5 4"><path d="M0 0h5L2.500 4z" fill="#606060" /></svg>
        </span>
      </span>
      {unit}
    </label>
  )
}

function SnapBar() {
  return (
    <div className={`flex h-[29px] shrink-0 justify-start gap-[61px] ${YAHEI}`}>
      <div className="flex items-center gap-1 border-r border-b border-[#d0d0d0] pr-[5px] pl-[3px] text-[#808080]">
        <span className="h-[22px] border-l-2 border-dotted border-[#b8b8b8]" />
        <span className="relative ml-1 flex h-[21px] w-[56px] border border-white">
          <select aria-label="偏移方式" className="w-full appearance-none">
            <option>不偏移</option>
          </select>
          <span className="pointer-events-none absolute top-0 right-0 flex h-full w-[13px] items-center justify-center border border-[#bfbfbf] bg-[#cccccc]">
            <Chevron color="#909090" />
          </span>
        </span>
        <span className="h-[21px] w-px bg-[#808080]" />
        <Spin label="X=" value="0" width="w-[42px]" unit="mm" />
        <Spin label="Y=" value="0" width="w-[42px]" unit="mm" />
        <span className="h-[21px] w-px bg-[#808080]" />
        <label className="flex items-center gap-2 text-black">
          <input type="checkbox" className="size-[13px] appearance-none border border-[#333] bg-white" />
          旋转
        </label>
        <Spin value="0.000" width="w-[52px]" unit="°" />
      </div>
      <div className="flex items-center border-b border-l border-[#d0d0d0] border-l-white">
        <Grip />
        <Tool icon="ortho" label="正交" />
        <Tool icon="cross" label="交点" />
        <Tool icon="perp" label="垂点" active />
        <Tool icon="mid" label="中点" active />
        <Tool icon="vertex" label="顶点" />
      </div>
    </div>
  )
}

function StatusBar() {
  const cell = 'border-l border-[#d0d0d0] pl-px'
  return (
    <footer className="flex h-[22px] shrink-0 items-center border-t border-[#c8c8c8] pb-px whitespace-nowrap leading-[18px]">
      <span className="w-[147px] overflow-hidden">X=2406649 Y=335923</span>
      <span className={`${cell} w-[80px]`}>层高:2.95m</span>
      <span className={`${cell} w-[130px]`}>建筑底标高:56.09m</span>
      <span className={`${cell} w-[49px]`}>1(83)</span>
      <span className={`${cell} w-[250px]`}>&nbsp;</span>
      <span className={cell}>按鼠标左键选择图元，按右键中止或ESC键取消</span>
    </footer>
  )
}

/* ---------- rules dialog ---------- */

const rules: [string, string][] = [
  ['模板面积与坡道的扣减', '1 扣与坡道相交模板面积'],
  ['模板面积与柱帽的扣减', '1 扣与柱帽相交部分模板面积'],
  ['砼墙模板面积与填充墙的扣减', '1 扣平行相交填充墙模板面积，加侧壁模板面积，不扣非平行相交填充墙'],
  ['现浇砼墙模板（内墙）面积与螺旋板的扣减', '1  扣板模板'],
  ['现浇砼墙模板（内墙）面积与现浇板的扣减', '1  扣板模板'],
  ['现浇砼墙模板（内墙）面积与预制板的扣减', '1  扣板模板'],
  ['现浇砼墙模板（外墙）面积与螺旋板的扣减', '1  扣板模板'],
  ['现浇砼墙模板（外墙）面积与现浇板的扣减', '2  外墙外侧不扣板模板，外墙内侧扣板模板'],
  ['现浇砼墙模板（外墙）面积与预制板的扣减', '1  扣板模板'],
  ['现浇砼墙模板面积与暗柱、端柱的扣减', '2  墙上柱，墙与柱同厚时，墙不扣柱，否则扣柱与墙相交的模板面积'],
  ['现浇砼墙模板面积与保温墙的扣减', '0 无影响'],
  ['现浇砼墙模板面积与壁龛的扣减', '2  加1.0m2以上的壁龛的侧壁面积'],
  ['现浇砼墙模板面积与带形窗的扣减', '4  扣1m2以上带形窗面积，加带形窗侧壁面积；'],
  ['现浇砼墙模板面积与带形洞的扣减', '2  扣带形洞面积，加带形洞侧壁面积；'],
  ['现浇砼墙模板面积与地沟的扣减', '1  扣地沟模板面积'],
  ['现浇砼墙模板面积与垫层的扣减', '1  扣垫层模板面积'],
  ['现浇砼墙模板面积与独基的扣减', '1  扣独基模板'],
  ['现浇砼墙模板面积与筏板基础的扣减', '1  扣筏板基础模板面积'],
  ['现浇砼墙模板面积与后浇带的扣减', '0 无影响'],
  ['现浇砼墙模板面积与基础梁的扣减', '1  扣基础梁模板面积'],
  ['现浇砼墙模板面积与连梁的扣减', '5 墙与连梁同厚且两边平齐，则墙模板面积不扣连梁模板面积，否则扣减'],
  ['现浇砼墙模板面积与梁的扣减', '5  墙与梁同厚且两边平齐，则墙模板面积不扣梁模板面积，否则扣减'],
  ['现浇砼墙模板面积与幕墙的扣减', '2 扣幕墙面积，加幕墙侧壁面积'],
  ['现浇砼墙模板面积与墙的扣减', '1  扣墙模板面积'],
  ['现浇砼墙模板面积与墙垛的扣减', '1  加墙垛模板'],
  ['现浇砼墙模板面积与圈梁的扣减', '3  非平行相交圈梁无影响，扣平行相交圈梁模板面积'],
  ['现浇砼墙模板面积与上柱墩的扣减', '1  扣柱墩模板面积'],
  ['现浇砼墙模板面积与条基的扣减', '1  扣条基模板'],
  ['现浇砼墙模板面积与砼地沟的扣减', '1  扣地沟模板面积'],
]

function RulesDialog() {
  const cell = 'border-r border-b border-[#c0c0c0] p-0 leading-[18px]'
  return (
    <div
      role="dialog"
      aria-labelledby="rules-title"
      className="absolute top-[2px] left-[2px] z-20 flex w-[806px] flex-col border border-[#707070] bg-[#f0f0f0] shadow-[0_3px_14px_rgba(0,0,0,0.45)]"
    >
      <div className="flex h-[29px] items-center bg-white pl-2">
        <Ico>{icons.app}</Ico>
        <h2 id="rules-title" className={`ml-[5px] flex-1 ${YAHEI}`}>计算规则</h2>
        <WindowButtons color="#000" faded />
      </div>
      <div className={`flex h-[32px] items-center border-b-2 border-[#b4b4b4] bg-white pl-[6px] ${YAHEI}`}>
        <button type="button" className="flex items-center gap-1">
          <Ico>{icons.restore}</Ico>
          恢复全部计算规则
        </button>
        <label htmlFor="filter" className="ml-1">过滤工程量:</label>
        <span className="relative ml-3 flex h-[23px] w-[178px] border-2 border-[#f0f0f0]">
          <select id="filter" className={`w-full appearance-none pl-px ${SONG}`}>
            <option>模板面积</option>
          </select>
          <span className="pointer-events-none absolute top-0 right-0 flex h-full w-[13px] items-center justify-center border border-[#adadad] bg-[#e1e1e1]">
            <Chevron />
          </span>
        </span>
        <span className="ml-[2px] h-7 w-px bg-[#d0d0d0]" />
      </div>
      <div className="flex border-r-2 border-b-2 border-l border-[#a0a0a0] bg-white pr-[2px] pl-[2px]">
        <table className="mr-[11px] flex-1 table-fixed border-separate border-spacing-0 whitespace-pre">
          <colgroup>
            <col className="w-[26px]" />
            <col className="w-[245px]" />
            <col className="w-[500px]" />
          </colgroup>
          <thead>
            <tr className="h-[19px]">
              <th className={`${cell} bg-linear-to-b from-white to-[#f0f0f0]`} aria-label="序号" />
              <th className={`${cell} bg-linear-to-b from-white to-[#f0f0f0] font-normal`}>规则描述</th>
              <th className={`${cell} bg-linear-to-b from-[#f8d69c] to-[#f3c164] font-normal text-[#6a0060]`}>规则选项</th>
            </tr>
          </thead>
          <tbody>
            {rules.map(([desc, option], i) => (
              <tr key={desc} className="h-[19px]">
                <td className={`${cell} text-center ${i === 4 ? 'bg-[#fcd08c] text-[#6a0060]' : 'bg-linear-to-r from-white to-[#f0f0f0]'}`}>
                  {i + 1}
                </td>
                <td className={`${cell} bg-[#f6faac] pl-px`}>{desc}</td>
                <td className={`${cell} relative pl-px ${i === 4 ? 'bg-[#d8eaf8]' : i === 9 ? 'bg-[#c0c0c0]' : ''}`}>
                  {option}
                  {i === 4 && <span className="absolute -top-[2px] -right-[2px] -bottom-[2px] -left-[2px] z-10 rounded-sm border-3 border-[#ff2015]" />}
                </td>
              </tr>
            ))}
          </tbody>
        </table>
        <ScrollBar thumb="h-[359px]" up />
      </div>
      <div className="relative flex h-[20px] items-start border-b border-[#a0a0a0] bg-[#f7f7f7] pl-[15px]">
        <svg width="130" height="17" viewBox="0 0 130 17" className="absolute top-0 left-[9px]" fill="#fff" stroke="#606060" aria-hidden="true">
          <path d="M62 6l3 9h48l6-15" />
          <path d="M0 0l5 15h52l5-15" />
        </svg>
        <button type="button" className="relative mr-[9px] leading-4">清单规则</button>
        <button type="button" className="relative leading-4">定额规则</button>
      </div>
      <div className="flex h-[37px] items-center justify-end gap-[23px] pr-6">
        <button type="button" className="h-[23px] w-[73px] border border-[#adadad] bg-[#e1e1e1]">确定</button>
        <button type="button" className="h-[23px] w-[73px] border border-[#adadad] bg-[#e1e1e1]">取消</button>
      </div>
      <svg width="56" height="226" viewBox="664 169 56 226" className="absolute top-[166px] left-[661px] z-10" aria-hidden="true">
        <path d="M672 171L683.500 184.500L679 182.500L719 394L717.500 394L670 184L666 187z" fill="#ff2015" />
      </svg>
    </div>
  )
}

/* ---------- formula dialog ---------- */

const formulas: [string, string][] = [
  ['长度', '=0.99m'],
  ['墙高', '=2.95m'],
  ['墙厚', '=0.2m'],
  ['体积', '=(0.99<长度>*2.95<墙高>*0.2<墙厚>)=0.5841m3'],
  ['模板面积', '=((0.99<左边线长度>+0.99<右边线长度>)*2.95<墙高>+1.18<原始端头模板面积>)=7.021m2'],
  ['超高模板面积', '=(((2.95*0.99)*2+(0.2*2.95)*2)<原始超高模板面积>)*1=7.021m2'],
  ['外墙外脚手架面积', '=(0.99<外墙外脚手架面积长度>)*2.95<外墙外脚手架面积高度>=2.9205m2'],
  ['模板面积（支模高度30M外）', '=7.021m2'],
  ['异形柱体积', '=0.5841m3'],
  ['异形柱模板面积', '=7.021m2'],
]

function ComboRow({ id, label, value }: { id: string; label: string; value: string }) {
  return (
    <div className="flex items-center">
      <label htmlFor={id} className="w-[70px]">{label}</label>
      <span className="relative flex h-[20px] flex-1">
        <select id={id} className="w-full appearance-none border border-[#adadad] bg-[#e1e1e1] pl-[3px]">
          <option>{value}</option>
        </select>
        <span className="pointer-events-none absolute top-[5px] right-1"><Chevron /></span>
      </span>
    </div>
  )
}

function FormulaDialog() {
  const button = 'h-[23px] border border-[#adadad] bg-[#e1e1e1] whitespace-nowrap'
  const radio = 'size-[13px] appearance-none rounded-full border border-[#333] bg-white checked:bg-[#222] checked:shadow-[inset_0_0_0_2px_white]'
  return (
    <div
      role="dialog"
      aria-labelledby="formula-title"
      className="absolute right-0 bottom-[3px] z-10 w-[648px] border border-r-0 border-[#808080] bg-[#f0f0f0] shadow-[0_0_10px_rgba(0,0,0,0.4)]"
    >
      <div className="flex h-[30px] items-center bg-white pl-2">
        <Ico>{icons.app}</Ico>
        <h2 id="formula-title" className="ml-[5px] flex-1 text-[#909090]">查看构件图元工程量计算式</h2>
        <WindowButtons color="#888" />
      </div>
      <div className="pt-[15px] pr-[10px] pb-[10px] pl-3">
        <div className="flex gap-[14px]">
          <fieldset className="h-[53px] w-[190px] border border-[#dcdcdc]">
            <legend className="ml-[6px] px-px leading-4">工程量类别</legend>
            <div className="flex gap-[10px] pt-[9px] pl-3">
              <label className="flex items-center gap-[3px] leading-4">
                <input type="radio" name="kind" className={radio} />
                清单工程量
              </label>
              <label className="flex items-center gap-[3px] leading-4">
                <input type="radio" name="kind" defaultChecked className={radio} />
                定额工程量
              </label>
            </div>
          </fieldset>
          <div className="flex flex-1 flex-col gap-[7px] pt-[6px]">
            <ComboRow id="component" label="构件名称:" value="剪力墙-200" />
            <ComboRow id="quantity" label="工程量名称:" value="[全部]" />
          </div>
        </div>
        <fieldset className="mt-[9px] border border-[#dcdcdc] pr-[10px] pb-[5px] pl-[9px]">
          <legend className="-ml-[3px] px-px leading-4">计算机算量</legend>
          <div className="mt-[3px] flex h-[174px] border border-[#a0a0a8] bg-white p-px">
            <ul className="flex-1 overflow-hidden pt-px pl-[25px] whitespace-nowrap leading-4">
              {formulas.map(([name, expr]) => (
                <li key={name} className="flex h-4 items-center">
                  <b className="text-[13px]">{name}</b>
                  {expr}
                </li>
              ))}
            </ul>
            <ScrollBar thumb="h-[130px]" up />
          </div>
        </fieldset>
        <fieldset className="mt-4 border border-[#dcdcdc] pr-[10px] pb-[7px] pl-[2px]">
          <legend className="ml-1 px-px leading-4">手工算量</legend>
          <textarea aria-label="手工算量" className="mt-[3px] block h-11 w-full resize-none border border-[#7a7a7a] bg-white" />
          <div className="mt-[7px] flex items-center pl-2">
            <button type="button" className={`${button} w-[88px]`}>重新输入(<u>R</u>)</button>
            <label htmlFor="result" className="ml-[23px]">手工算量结果=</label>
            <input id="result" readOnly className="ml-2 h-5 min-w-0 flex-1 border border-[#7a7a7a] bg-[#ffffe1]" />
          </div>
        </fieldset>
        <div className="mt-[13px] flex gap-[18px]">
          <button type="button" className={`${button} w-[106px]`}>查看计算规则(<u>I</u>)</button>
          <button type="button" className={`${button} w-[113px]`}>查看三维扣减图(<u>T</u>)</button>
          <button type="button" className={`${button} w-[108px]`}>显示详细计算式</button>
          <button type="button" className="ml-auto h-[23px] w-[73px] border-2 border-[#0078d7] bg-[#e1e1e1]">关闭(<u>C</u>)</button>
        </div>
      </div>
    </div>
  )
}

export default function App() {
  return (
    <div className={`relative flex h-screen flex-col overflow-hidden bg-[#f0f0f0] text-xs text-black ${SONG}`}>
      <TopBars />
      <main className="flex min-h-0 flex-1">
        <TreePanel />
        <PropertyPanel />
        <div className="flex min-w-0 flex-1 flex-col">
          <div className="flex min-h-0 flex-1">
            <SideBar />
            <ModelView />
          </div>
          <SnapBar />
        </div>
      </main>
      <StatusBar />
      <div className="h-[3px] shrink-0 bg-[#22343e]" />
      <RulesDialog />
      <FormulaDialog />
    </div>
  )
}
